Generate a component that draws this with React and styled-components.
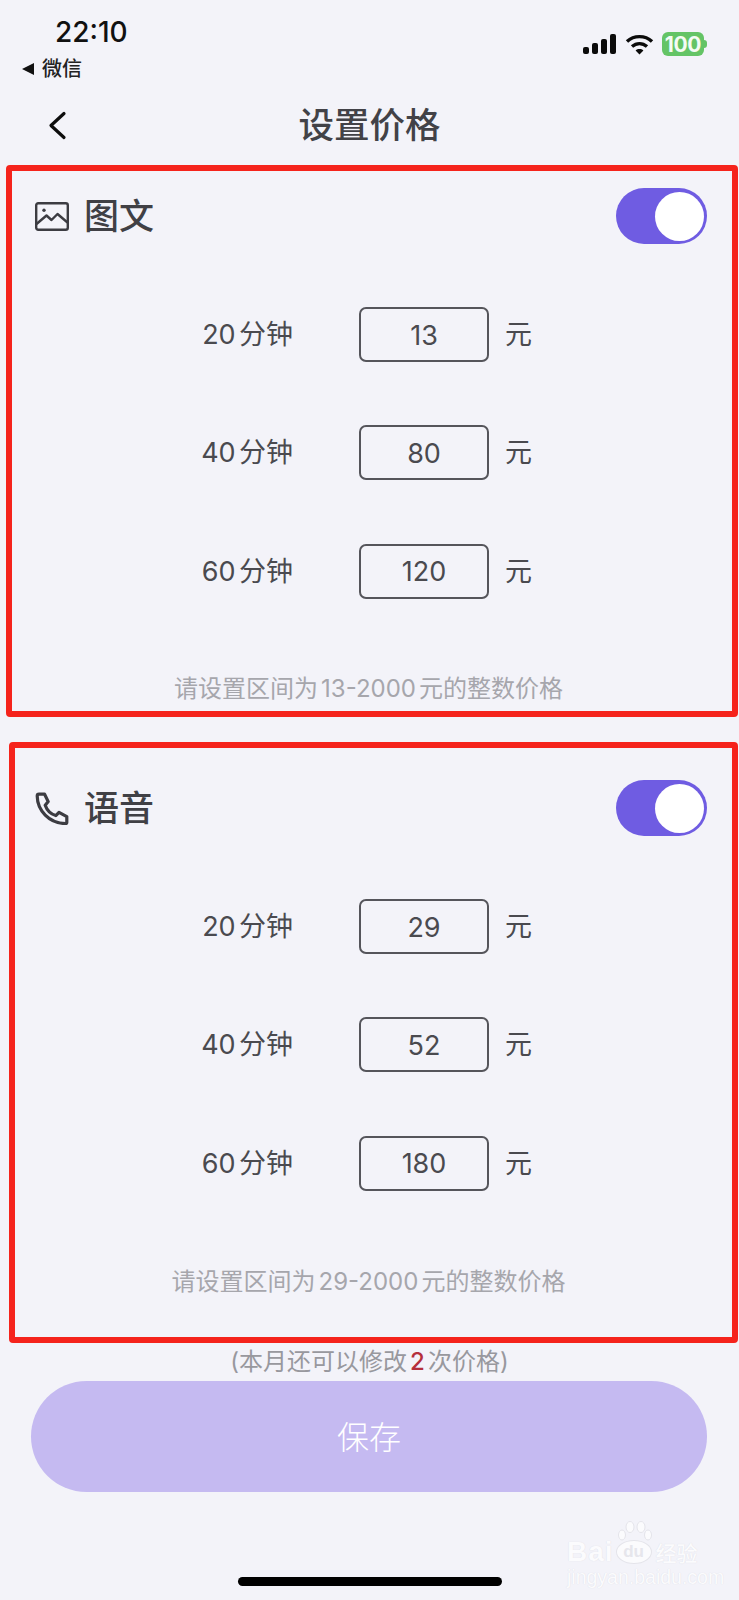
import React from "react";
import styled, { createGlobalStyle } from "styled-components";

const GlobalStyle = createGlobalStyle`
  html, body {
    margin: 0;
    padding: 0;
    background: #f3f3f9;
  }
  body {
    font-family: Inter, "Noto Sans CJK SC", sans-serif;
    text-autospace: normal;
  }
`;

const Page = styled.div`
  position: relative;
  width: 739px;
  height: 1600px;
  overflow: hidden;
  background: #f3f3f9;
  color: #3c3c42;
`;

//Status bar
const StatusBar = styled.div`
  display: flex;
  justify-content: space-between;
  height: 86px;
  padding: 0 31px 0 22px;
  box-sizing: border-box;
`;

const StatusLeft = styled.div`
  display: flex;
  flex-direction: column;
  padding-top: 15px;
`;

const Clock = styled.div`
  margin-left: 33px;
  font-size: 28px;
  line-height: 34px;
  font-weight: 500;
  color: #111;
`;

const BackToApp = styled.div`
  display: flex;
  align-items: center;
  gap: 8px;
  margin-top: 5px;
  font-size: 20px;
  line-height: 30px;
  font-weight: 500;
  color: #222;
`;

const StatusRight = styled.div`
  display: flex;
  align-items: center;
  gap: 8px;
  height: 44px;
  margin-top: 22px;
`;

const Battery = styled.div`
  position: relative;
  display: flex;
  align-items: center;
  justify-content: center;
  width: 42px;
  height: 24px;
  margin-right: 4px;
  border-radius: 6px;
  background: #64c466;
  color: #f4fbf4;
  font-size: 21px;
  font-weight: 700;
  letter-spacing: -0.3px;

  &::after {
    content: "";
    position: absolute;
    right: -3px;
    top: 8px;
    width: 3px;
    height: 8px;
    border-radius: 0 3px 3px 0;
    background: #64c466;
  }
`;

//Header
const Header = styled.div`
  display: flex;
  align-items: center;
  height: 79px;
`;

const BackButton = styled.div`
  display: flex;
  margin-left: 47px;
`;

const Title = styled.h1`
  margin: 0;
  flex: 1;
  padding-right: 67px;
  text-align: center;
  font-size: 35.5px;
  line-height: 48px;
  font-weight: 500;
  color: #424247;
`;

//Price cards
const Frame = styled.section`
  box-sizing: border-box;
  margin-left: ${(p) => p.$left}px;
  margin-top: ${(p) => p.$top}px;
  width: ${(p) => 738 - p.$left}px;
  height: ${(p) => p.$height}px;
  padding: ${(p) => p.$padTop}px 25px 0 ${(p) => 29 - p.$left}px;
  border: 6px solid #f5231c;
  border-radius: 4px;
`;

const CardHead = styled.div`
  display: flex;
  align-items: center;
  height: 56px;
`;

const CardIcon = styled.div`
  display: flex;
  width: 49px;
`;

const CardTitle = styled.h2`
  flex: 1;
  margin: 0;
  font-size: 35px;
  line-height: 48px;
  font-weight: 500;
  color: #404045;
`;

const Toggle = styled.div`
  box-sizing: border-box;
  display: flex;
  justify-content: flex-end;
  align-items: center;
  width: 91px;
  height: 56px;
  padding-right: 3px;
  border-radius: 28px;
  background: #6f5ce2;
`;

const Knob = styled.div`
  width: 49px;
  height: 49px;
  border-radius: 50%;
  background: #fff;
`;

const Rows = styled.div`
  display: flex;
  flex-direction: column;
  gap: 63.4px;
  margin-top: 63px;
`;

const Row = styled.div`
  display: grid;
  grid-template-columns: 258px 130px auto;
  column-gap: 66px;
  align-items: center;
`;

const Label = styled.div`
  text-align: right;
  font-size: 27px;
  line-height: 55px;
  color: #4a4a4f;
`;

const PriceInput = styled.input`
  box-sizing: border-box;
  width: 130px;
  height: 55px;
  padding: 1px 0 0;
  border: 2px solid #55555b;
  border-radius: 7px;
  background: transparent;
  text-align: center;
  font-family: inherit;
  font-size: 27px;
  color: #4a4a4f;
  outline: none;
`;

const Unit = styled.div`
  margin-left: -50px;
  font-size: 27px;
  line-height: 55px;
  color: #4a4a4f;
`;

const Hint = styled.p`
  margin: ${(p) => p.$top}px 0 0;
  padding-right: 5px;
  text-align: center;
  font-size: 24px;
  line-height: 34px;
  color: #a6a6ac;
`;

const Note = styled.p`
  margin: 2px 0 0;
  text-align: center;
  font-size: 24px;
  line-height: 34px;
  color: #98989e;
`;

const Count = styled.span`
  color: #b5303c;
  font-weight: 500;
`;

const SaveButton = styled.button`
  display: block;
  width: 676px;
  height: 111px;
  margin: 2px 0 0 31px;
  padding: 0 0 3px;
  border: 0;
  border-radius: 56px;
  background: #c5baf1;
  color: #fff;
  font-family: inherit;
  font-size: 32px;
  font-weight: 300;
`;

const HomeBar = styled.div`
  width: 264px;
  height: 9px;
  margin: 85px 0 0 238px;
  border-radius: 5px;
  background: #000;
`;

//Watermark lies over the page
const Watermark = styled.div`
  position: absolute;
  left: 567px;
  top: 1538px;
  width: 134px;
  color: #fbfbfd;
  font-family: "Liberation Sans", sans-serif;
  text-shadow: 0 0 1px #d8d8e0;
`;

const MarkLine = styled.div`
  display: flex;
  align-items: center;
  height: 28px;
`;

const MarkLatin = styled.span`
  font-size: 28px;
  font-weight: 700;
  letter-spacing: 1px;
`;

const MarkHead = styled.div`
  position: relative;
  display: flex;
  align-items: center;
  justify-content: center;
  width: 36px;
  height: 24px;
  margin: 0 4px 0 2px;
  border-radius: 50%;
  border: 1px solid #e4e4ea;
  box-sizing: border-box;
  background: #fbfbfd;
  color: #e6e6ec;
  font-size: 17px;
  font-weight: 700;
  text-shadow: none;
`;

const MarkToes = styled.svg`
  position: absolute;
  left: 1px;
  top: -20px;
`;

const MarkCn = styled.span`
  font-family: "Noto Sans CJK SC", sans-serif;
  font-size: 21px;
  font-weight: 500;
`;

const MarkUrl = styled.div`
  font-size: 19.5px;
  line-height: 20px;
  margin-top: 1px;
  white-space: nowrap;
`;

const SignalIcon = () => (
  <svg width="34" height="21" viewBox="0 0 34 21" fill="#0b0b0b">
    <rect x="0" y="13" width="6" height="7" rx="2" />
    <rect x="9" y="9" width="6" height="11" rx="2" />
    <rect x="18" y="5" width="6" height="15" rx="2" />
    <rect x="27" y="0" width="6" height="20" rx="2" />
  </svg>
);

const WifiIcon = () => (
  <svg width="29" height="21" viewBox="0 0 29 21" fill="none" stroke="#0b0b0b" strokeWidth="3.4">
    <path d="M2 7.5C9 1 20 1 27 7.5" />
    <path d="M7 12.6C11.5 8.6 17.5 8.6 22 12.6" />
    <path d="M14.5 20.5L10.6 16.4C12.8 14.6 16.2 14.6 18.4 16.4Z" fill="#0b0b0b" stroke="none" />
  </svg>
);

const ChevronIcon = () => (
  <svg width="20" height="29" viewBox="0 0 20 29" fill="none" stroke="#0d0d0d" strokeWidth="3.2" strokeLinecap="round" strokeLinejoin="round">
    <path d="M17 2.5L4 14.5L17 26.5" />
  </svg>
);

const ImageIcon = () => (
  <svg width="34" height="29" viewBox="0 0 34 29" fill="none" stroke="#3c3c42" strokeWidth="2.4" strokeLinejoin="round">
    <rect x="1.2" y="1.2" width="31.6" height="26.6" rx="2" />
    <circle cx="9" cy="8.2" r="1.7" fill="#3c3c42" stroke="none" />
    <path d="M1.5 22L11.5 13.5L16.5 18L22.5 12L32.5 20.5" />
  </svg>
);

const PhoneIcon = () => (
  <svg width="34" height="33" viewBox="0 0 34 33" fill="none" stroke="#3c3c42" strokeWidth="3.2" strokeLinejoin="round" strokeLinecap="round">
    <path d="M4 2.2H9.6L13.2 9.6L10.2 13.2C12 18.4 15.8 22 20.8 23.6L24 20.4L31.8 24.6V30.6C31.8 31.2 31.2 31.6 30.6 31.6C14 31.2 2.4 18.4 2.2 4C2.2 3 3 2.2 4 2.2Z" />
  </svg>
);

const PriceRow = ({ minutes, price }) => (
  <Row>
    <Label>{minutes}分钟</Label>
    <PriceInput readOnly value={price} />
    <Unit>元</Unit>
  </Row>
);

const PriceCard = ({ icon, name, prices, range, left, top, height, padTop, hintTop }) => (
  <Frame $left={left} $top={top} $height={height} $padTop={padTop}>
    <CardHead>
      <CardIcon>{icon}</CardIcon>
      <CardTitle>{name}</CardTitle>
      <Toggle>
        <Knob />
      </Toggle>
    </CardHead>
    <Rows>
      {prices.map((p) => (
        <PriceRow key={p.minutes} minutes={p.minutes} price={p.price} />
      ))}
    </Rows>
    <Hint $top={hintTop}>请设置区间为{range}元的整数价格</Hint>
  </Frame>
);

const App = () => {
  return (
    <Page>
      <GlobalStyle />
      <StatusBar>
        <StatusLeft>
          <Clock>22:10</Clock>
          <BackToApp>
            <svg width="12" height="12" viewBox="0 0 12 12" fill="#111">
              <path d="M0 6L12 0V12Z" />
            </svg>
            微信
          </BackToApp>
        </StatusLeft>
        <StatusRight>
          <SignalIcon />
          <WifiIcon />
          <Battery>100</Battery>
        </StatusRight>
      </StatusBar>
      <Header>
        <BackButton>
          <ChevronIcon />
        </BackButton>
        <Title>设置价格</Title>
      </Header>
      <PriceCard
        icon={<ImageIcon />}
        name="图文"
        left={6}
        top={0}
        height={552}
        padTop={17}
        hintTop={73}
        range="13-2000"
        prices={[
          { minutes: 20, price: 13 },
          { minutes: 40, price: 80 },
          { minutes: 60, price: 120 },
        ]}
      />
      <PriceCard
        icon={<PhoneIcon />}
        name="语音"
        left={9}
        top={25}
        height={601}
        padTop={32}
        hintTop={74}
        range="29-2000"
        prices={[
          { minutes: 20, price: 29 },
          { minutes: 40, price: 52 },
          { minutes: 60, price: 180 },
        ]}
      />
      <Note>
        (本月还可以修改<Count>2</Count>次价格)
      </Note>
      <SaveButton>保存</SaveButton>
      <HomeBar />
      <Watermark>
        <MarkLine>
          <MarkLatin>Bai</MarkLatin>
          <MarkHead>
            <MarkToes width="34" height="22" viewBox="0 0 34 22" fill="#fbfbfd" stroke="#e4e4ea">
              <ellipse cx="4" cy="14" rx="3.5" ry="5" />
              <ellipse cx="12" cy="6" rx="4" ry="5.5" />
              <ellipse cx="23" cy="6" rx="4" ry="5.5" />
              <ellipse cx="30" cy="14" rx="3.5" ry="5" />
            </MarkToes>
            du
          </MarkHead>
          <MarkCn>经验</MarkCn>
        </MarkLine>
        <MarkUrl>jingyan.baidu.com</MarkUrl>
      </Watermark>
    </Page>
  );
};

export default App;
